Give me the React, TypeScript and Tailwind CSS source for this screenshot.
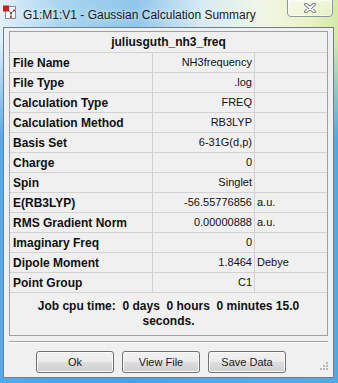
import React from "react";

const rows: [string, string, string][] = [
  ["File Name", "NH3frequency", ""],
  ["File Type", ".log", ""],
  ["Calculation Type", "FREQ", ""],
  ["Calculation Method", "RB3LYP", ""],
  ["Basis Set", "6-31G(d,p)", ""],
  ["Charge", "0", ""],
  ["Spin", "Singlet", ""],
  ["E(RB3LYP)", "-56.55776856", "a.u."],
  ["RMS Gradient Norm", "0.00000888", "a.u."],
  ["Imaginary Freq", "0", ""],
  ["Dipole Moment", "1.8464", "Debye"],
  ["Point Group", "C1", ""],
];

const AppIcon = () => (
  <svg width="14" height="14" viewBox="0 0 14 14">
    <rect x="2.5" y="1.5" width="10" height="12" fill="#fff" stroke="#8a8a8a" />
    <line x1="8" y1="8" x2="5" y2="5" stroke="#777" strokeWidth="1" />
    <line x1="8" y1="8" x2="11" y2="5.5" stroke="#777" strokeWidth="1" />
    <line x1="8" y1="8" x2="8" y2="12" stroke="#777" strokeWidth="1" />
    <circle cx="11" cy="5.5" r="1" fill="#c02020" />
    <circle cx="8" cy="12" r="1" fill="#c02020" />
    <circle cx="8" cy="8" r="1.2" fill="#555" />
    <rect x="0" y="0.5" width="6" height="6" fill="#d41c1c" />
  </svg>
);

const CloseGlyph = () => (
  <svg width="12" height="10" viewBox="0 0 12 10">
    <path d="M2 1.5 L10 8.5 M10 1.5 L2 8.5" stroke="#5a6878" strokeWidth="3.6" strokeLinecap="round" />
    <path d="M2 1.5 L10 8.5 M10 1.5 L2 8.5" stroke="#ffffff" strokeWidth="1.8" strokeLinecap="round" />
  </svg>
);

const Grip = () => (
  <svg width="10" height="10" viewBox="0 0 10 10">
    {[
      [8, 0],
      [8, 3],
      [5, 3],
      [8, 6],
      [5, 6],
      [2, 6],
    ].map(([x, y], i) => (
      <rect key={i} x={x} y={y + 1} width="2" height="2" fill="#b8b8b8" />
    ))}
  </svg>
);

const Button = ({ label }: { label: string }) => (
  <button className="w-[78px] h-[22px] rounded-[3px] border border-[#707070] bg-[linear-gradient(180deg,#f2f2f2_0%,#ebebeb_50%,#dddddd_51%,#cfcfcf_100%)] shadow-[inset_0_0_0_1px_#fcfcfc] text-[11px] text-[#1a1a1a]">
    {label}
  </button>
);

export default function App() {
  return (
    <div className="w-[338px] h-[383px] overflow-hidden flex flex-col font-['Liberation_Sans',Arial,sans-serif] bg-[linear-gradient(180deg,rgba(58,156,232,0)_0px,rgba(58,156,232,0)_40px,rgba(58,156,232,0.85)_140px),linear-gradient(90deg,#e2f0f9_0%,#a9d5f0_18%,#8fc6ea_40%,#d7ebf4_60%,#f0f6e6_78%,#e9f2c2_92%,#d4e9a6_100%)]">
      {/* title bar */}
      <div className="h-[27px] flex items-start shrink-0">
        <div className="ml-[3px] mt-[5px]">
          <AppIcon />
        </div>
        <div className="ml-[6px] mt-[6px] text-[12px] text-[#1b1b1b] whitespace-nowrap [text-shadow:0_0_6px_rgba(255,255,255,0.9)]">
          G1:M1:V1 - Gaussian Calculation Summary
        </div>
        <div className="ml-auto mr-[5px] -mt-px w-[46px] h-[18px] rounded-b-[4px] border border-[#8b97a4] bg-[linear-gradient(180deg,rgba(255,255,255,0.55),rgba(255,255,255,0.25))] shadow-[inset_0_0_0_1px_rgba(255,255,255,0.6)] flex items-center justify-center">
          <CloseGlyph />
        </div>
      </div>

      {/* client area */}
      <div className="relative ml-[3px] w-[331px] h-[351px] border border-[#6f7f90] bg-[#f0f0f0]">
        <div className="ml-[5px] mt-[3px] w-[319px] h-[305px] border border-[#a0a0a0] flex flex-col text-[#111]">
          <div className="h-[21px] border-b border-[#d2d2d2] flex items-center justify-center text-[12px] font-bold">
            juliusguth_nh3_freq
          </div>
          {rows.map(([label, value, unit]) => (
            <div key={label} className="h-[20px] border-b border-[#d2d2d2] flex text-[11px]">
              <div className="w-[143px] border-r border-[#d2d2d2] pl-[3px] flex items-center font-bold text-[12px]">
                {label}
              </div>
              <div className="w-[102px] border-r border-[#d2d2d2] pr-[2px] flex items-center justify-end">
                {value}
              </div>
              <div className="flex-1 pl-[2px] flex items-center">{unit}</div>
            </div>
          ))}
          <div className="mt-[6px] mx-auto w-[290px] text-center text-[12px] font-bold leading-[15px] whitespace-pre-wrap">
            {"Job cpu time:  0 days  0 hours  0 minutes 15.0 seconds."}
          </div>
        </div>

        <div className="ml-[5px] mt-[5px] w-[319px] h-[2px] border-t border-[#a0a0a0] border-b border-b-white" />

        <div className="mt-[8px] pl-[32px] flex gap-[8px]">
          <Button label="Ok" />
          <Button label="View File" />
          <Button label="Save Data" />
        </div>

        <div className="absolute right-[5px] bottom-[6px]">
          <Grip />
        </div>
      </div>
    </div>
  );
}
